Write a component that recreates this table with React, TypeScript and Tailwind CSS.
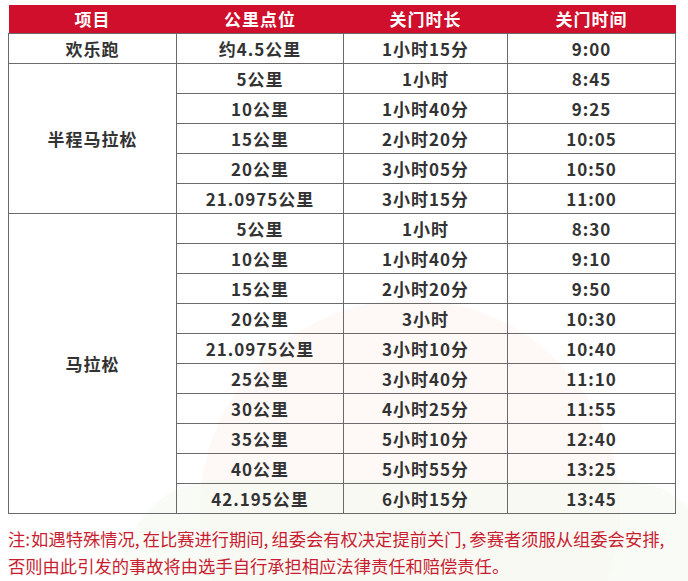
const halfRows = [
  ['5公里', '1小时', '8:45'],
  ['10公里', '1小时40分', '9:25'],
  ['15公里', '2小时20分', '10:05'],
  ['20公里', '3小时05分', '10:50'],
  ['21.0975公里', '3小时15分', '11:00'],
];

const fullRows = [
  ['5公里', '1小时', '8:30'],
  ['10公里', '1小时40分', '9:10'],
  ['15公里', '2小时20分', '9:50'],
  ['20公里', '3小时', '10:30'],
  ['21.0975公里', '3小时10分', '10:40'],
  ['25公里', '3小时40分', '11:10'],
  ['30公里', '4小时25分', '11:55'],
  ['35公里', '5小时10分', '12:40'],
  ['40公里', '5小时55分', '13:25'],
  ['42.195公里', '6小时15分', '13:45'],
];

const cell = 'border border-[#6b6b6b] h-[30px] p-0 text-center align-middle';

function Group({ name, rows }: { name: string; rows: string[][] }) {
  return (
    <>
      {rows.map((r, i) => (
        <tr key={i}>
          {i === 0 && (
            <td rowSpan={rows.length} className={cell}>
              {name}
            </td>
          )}
          {r.map((v, j) => (
            <td key={j} className={cell}>
              {v}
            </td>
          ))}
        </tr>
      ))}
    </>
  );
}

// 注释里的逗号后面留一点空
function Note({ text }: { text: string }) {
  return (
    <p className="whitespace-nowrap">
      {text.split(/([,:])/).map((part, i) =>
        part === ',' || part === ':' ? (
          <span key={i} className={part === ',' ? 'mr-[3px]' : 'mr-[1px]'}>
            {part}
          </span>
        ) : (
          <span key={i}>{part}</span>
        ),
      )}
    </p>
  );
}

export default function App() {
  return (
    <div
      className="relative w-[688px] h-[581px] bg-white overflow-hidden"
      style={{ fontFamily: '"Noto Sans CJK SC", "Noto Sans", sans-serif' }}
    >
      {/* 淡淡的背景水印 */}
      <div className="absolute left-[200px] top-[300px] w-[420px] h-[420px] rounded-full bg-[#fdf5f1] opacity-60" />
      <div className="absolute left-[120px] top-[480px] w-[600px] h-[200px] rounded-full bg-[#f5f9f0] opacity-60" />

      <div className="relative pt-[5px] pl-[8px]">
        <table className="table-fixed border-collapse w-[667px] text-[17px] font-bold text-[#333] tracking-[1px] leading-none">
          <colgroup>
            <col className="w-[168px]" />
            <col className="w-[167px]" />
            <col className="w-[164px]" />
            <col className="w-[168px]" />
          </colgroup>
          <thead>
            <tr className="bg-[#cf0f2b] text-white">
              {['项目', '公里点位', '关门时长', '关门时间'].map((h) => (
                <th key={h} className="h-[28px] p-0 text-center align-middle font-bold">
                  {h}
                </th>
              ))}
            </tr>
          </thead>
          <tbody>
            <tr>
              <td className={cell}>欢乐跑</td>
              <td className={cell}>约4.5公里</td>
              <td className={cell}>1小时15分</td>
              <td className={cell}>9:00</td>
            </tr>
            <Group name="半程马拉松" rows={halfRows} />
            <Group name="马拉松" rows={fullRows} />
          </tbody>
        </table>

        <div className="mt-[11px] text-[17.3px] leading-[27px] text-[#c81e32]">
          <Note text="注:如遇特殊情况,在比赛进行期间,组委会有权决定提前关门,参赛者须服从组委会安排," />
          <Note text="否则由此引发的事故将由选手自行承担相应法律责任和赔偿责任。" />
        </div>
      </div>
    </div>
  );
}
